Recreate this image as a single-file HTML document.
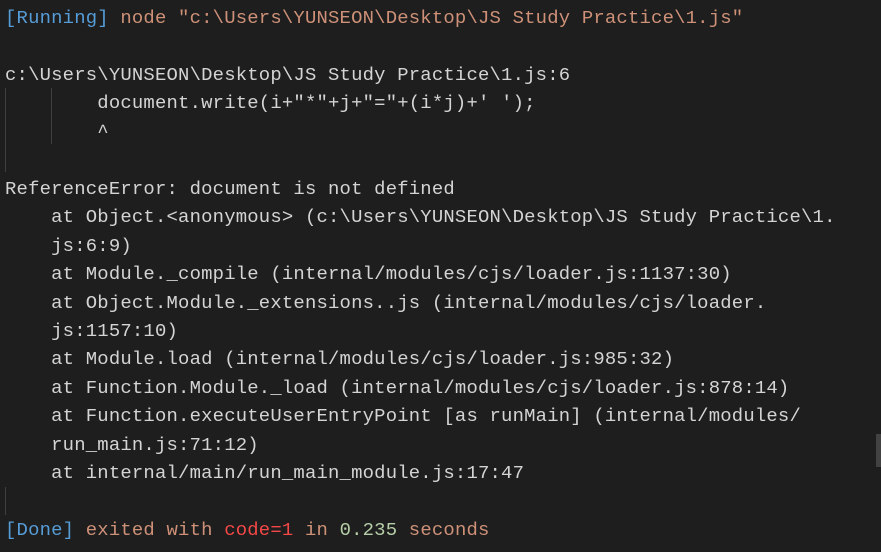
<!DOCTYPE html><html><head><style>
html,body{margin:0;padding:0;background:#1e1e1e;width:881px;height:552px;overflow:hidden}
pre{margin:0;position:absolute;left:5px;top:4px;font-family:"Liberation Mono",monospace;font-size:18.9px;letter-spacing:0.2px;line-height:28.45px;color:#d4d4d4;white-space:pre}
.b{color:#569cd6}.o{color:#ce9178}.r{color:#f44747}.g{color:#b5cea8}
.gl{position:absolute;width:1px;background:#404040}
</style></head><body>
<div class="gl" style="left:5px;top:88px;height:84px"></div>
<div class="gl" style="left:51px;top:88px;height:56px"></div>
<div class="gl" style="left:5px;top:487px;height:28px"></div>
<div style="position:absolute;left:876px;top:434px;width:5px;height:33px;background:#424242"></div>
<pre><span class="b">[Running]</span><span class="o"> node "c:\Users\YUNSEON\Desktop\JS Study Practice\1.js"</span>

c:\Users\YUNSEON\Desktop\JS Study Practice\1.js:6
        document.write(i+"*"+j+"="+(i*j)+' ');
        ^

ReferenceError: document is not defined
    at Object.&lt;anonymous&gt; (c:\Users\YUNSEON\Desktop\JS Study Practice\1.
    js:6:9)
    at Module._compile (internal/modules/cjs/loader.js:1137:30)
    at Object.Module._extensions..js (internal/modules/cjs/loader.
    js:1157:10)
    at Module.load (internal/modules/cjs/loader.js:985:32)
    at Function.Module._load (internal/modules/cjs/loader.js:878:14)
    at Function.executeUserEntryPoint [as runMain] (internal/modules/
    run_main.js:71:12)
    at internal/main/run_main_module.js:17:47

<span class="b">[Done]</span><span class="o"> exited with </span><span class="r">code=1</span><span class="o"> in </span><span class="g">0.235</span><span class="o"> seconds</span></pre>
</body></html>
